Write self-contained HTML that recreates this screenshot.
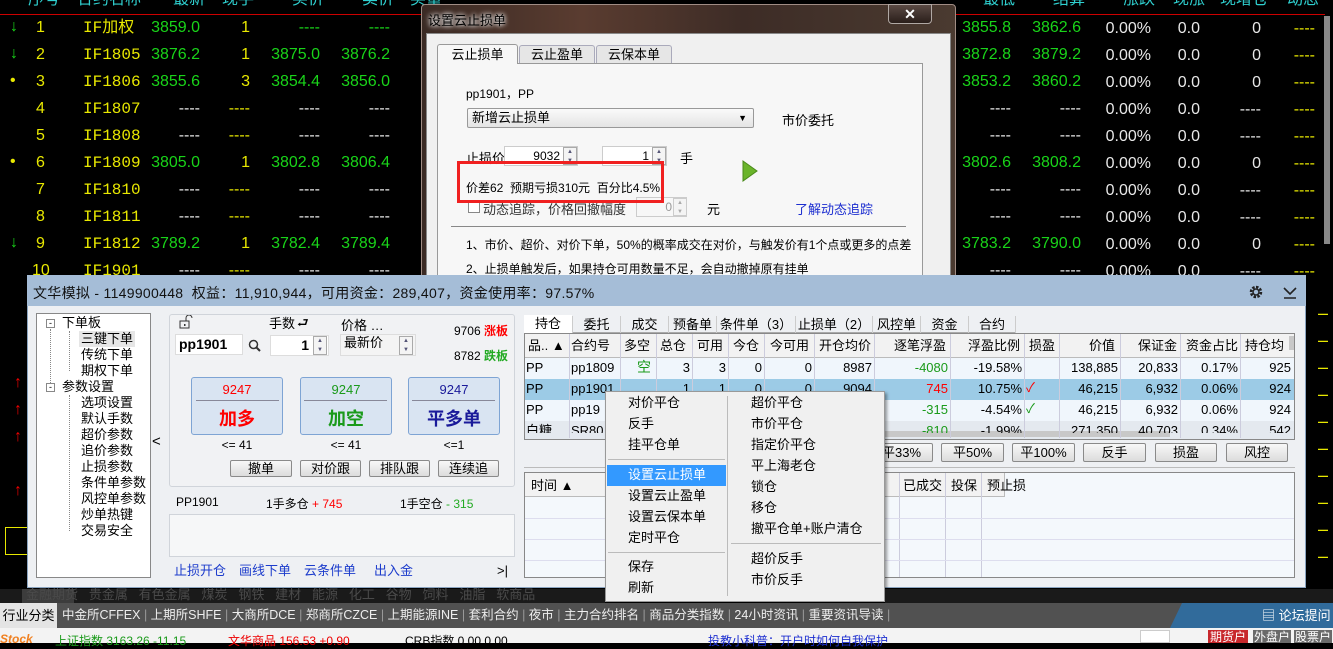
<!DOCTYPE html>
<html><head><meta charset="utf-8">
<style>
*{margin:0;padding:0;box-sizing:border-box}
body{width:1333px;height:643px;overflow:hidden;background:#000;position:relative;font-family:"Liberation Sans","Noto Sans CJK SC",sans-serif;font-size:12px}
.a{position:absolute;white-space:nowrap}
.q{font-family:"Liberation Sans","Noto Sans CJK SC",sans-serif;font-size:16px;line-height:18px}
.n{font-family:"Liberation Mono","Noto Sans CJK SC",monospace;font-size:16px;line-height:18px;color:#e8e800}
.g{color:#19d419}.y{color:#e8e800}.w{color:#e8e8e8}.cy{color:#2fd0d0}
.t13{font-size:13px;line-height:16px}
.btn{position:absolute;border:1px solid #8a8a8a;border-radius:2px;background:linear-gradient(#f8f8f8,#dcdcdc);text-align:center;font-size:13px;line-height:17px;color:#000}
.sp{position:absolute;width:14px;height:19px;border:1px solid #aaa;background:#f4f4f4;font-size:6px;line-height:9px;text-align:center;color:#557}
</style></head><body>

<div class="a cy q" style="top:-9px;left:28px">序号</div>
<div class="a cy q" style="top:-9px;left:77px">合约名称</div>
<div class="a cy q" style="top:-9px;left:173px">最新</div>
<div class="a cy q" style="top:-9px;left:222px">现手</div>
<div class="a cy q" style="top:-9px;left:292px">买价</div>
<div class="a cy q" style="top:-9px;left:362px">卖价</div>
<div class="a cy q" style="top:-9px;left:410px">买量</div>
<div class="a cy q" style="top:-9px;left:983px">最低</div>
<div class="a cy q" style="top:-9px;left:1053px">结算</div>
<div class="a cy q" style="top:-9px;left:1123px">涨跌</div>
<div class="a cy q" style="top:-9px;left:1173px">现涨</div>
<div class="a cy q" style="top:-9px;left:1220px">现增仓</div>
<div class="a cy q" style="top:-9px;left:1287px">动态</div>
<div class="a" style="top:14px;left:0;width:1325px;height:1px;background:#c00"></div>
<div class="a" style="top:16px;left:1324px;width:6px;height:228px;background:#888"></div>

<div class="a g q" style="top:18px;left:10px">↓</div>
<div class="a y q" style="top:19px;left:36px">1</div><div class="a n" style="top:19px;left:83px">IF加权</div>
<div class="a g q" style="top:19px;right:1133px">3859.0</div><div class="a y q" style="top:19px;right:1083px">1</div>
<div class="a g q" style="top:19px;right:1013px">----</div><div class="a g q" style="top:19px;right:943px">----</div>
<div class="a g q" style="top:45px;left:10px">↓</div>
<div class="a y q" style="top:46px;left:36px">2</div><div class="a n" style="top:46px;left:83px">IF1805</div>
<div class="a g q" style="top:46px;right:1133px">3876.2</div><div class="a y q" style="top:46px;right:1083px">1</div>
<div class="a g q" style="top:46px;right:1013px">3875.0</div><div class="a g q" style="top:46px;right:943px">3876.2</div>
<div class="a y q" style="top:72px;left:10px">•</div>
<div class="a y q" style="top:73px;left:36px">3</div><div class="a n" style="top:73px;left:83px">IF1806</div>
<div class="a g q" style="top:73px;right:1133px">3855.6</div><div class="a y q" style="top:73px;right:1083px">3</div>
<div class="a g q" style="top:73px;right:1013px">3854.4</div><div class="a g q" style="top:73px;right:943px">3856.0</div>
<div class="a y q" style="top:100px;left:36px">4</div><div class="a n" style="top:100px;left:83px">IF1807</div>
<div class="a w q" style="top:100px;right:1133px">----</div><div class="a y q" style="top:100px;right:1083px">----</div>
<div class="a w q" style="top:100px;right:1013px">----</div><div class="a w q" style="top:100px;right:943px">----</div>
<div class="a y q" style="top:127px;left:36px">5</div><div class="a n" style="top:127px;left:83px">IF1808</div>
<div class="a w q" style="top:127px;right:1133px">----</div><div class="a y q" style="top:127px;right:1083px">----</div>
<div class="a w q" style="top:127px;right:1013px">----</div><div class="a w q" style="top:127px;right:943px">----</div>
<div class="a y q" style="top:153px;left:10px">•</div>
<div class="a y q" style="top:154px;left:36px">6</div><div class="a n" style="top:154px;left:83px">IF1809</div>
<div class="a g q" style="top:154px;right:1133px">3805.0</div><div class="a y q" style="top:154px;right:1083px">1</div>
<div class="a g q" style="top:154px;right:1013px">3802.8</div><div class="a g q" style="top:154px;right:943px">3806.4</div>
<div class="a y q" style="top:181px;left:36px">7</div><div class="a n" style="top:181px;left:83px">IF1810</div>
<div class="a w q" style="top:181px;right:1133px">----</div><div class="a y q" style="top:181px;right:1083px">----</div>
<div class="a w q" style="top:181px;right:1013px">----</div><div class="a w q" style="top:181px;right:943px">----</div>
<div class="a y q" style="top:208px;left:36px">8</div><div class="a n" style="top:208px;left:83px">IF1811</div>
<div class="a w q" style="top:208px;right:1133px">----</div><div class="a y q" style="top:208px;right:1083px">----</div>
<div class="a w q" style="top:208px;right:1013px">----</div><div class="a w q" style="top:208px;right:943px">----</div>
<div class="a g q" style="top:234px;left:10px">↓</div>
<div class="a y q" style="top:235px;left:36px">9</div><div class="a n" style="top:235px;left:83px">IF1812</div>
<div class="a g q" style="top:235px;right:1133px">3789.2</div><div class="a y q" style="top:235px;right:1083px">1</div>
<div class="a g q" style="top:235px;right:1013px">3782.4</div><div class="a g q" style="top:235px;right:943px">3789.4</div>
<div class="a y q" style="top:262px;left:32px">10</div><div class="a n" style="top:262px;left:83px">IF1901</div>
<div class="a w q" style="top:262px;right:1133px">----</div><div class="a y q" style="top:262px;right:1083px">----</div>
<div class="a w q" style="top:262px;right:1013px">----</div><div class="a w q" style="top:262px;right:943px">----</div>

<div class="a g q" style="top:19px;right:322px">3855.8</div><div class="a g q" style="top:19px;right:252px">3862.6</div>
<div class="a g q" style="top:46px;right:322px">3872.8</div><div class="a g q" style="top:46px;right:252px">3879.2</div>
<div class="a g q" style="top:73px;right:322px">3853.2</div><div class="a g q" style="top:73px;right:252px">3860.2</div>
<div class="a w q" style="top:100px;right:322px">----</div><div class="a w q" style="top:100px;right:252px">----</div>
<div class="a w q" style="top:127px;right:322px">----</div><div class="a w q" style="top:127px;right:252px">----</div>
<div class="a g q" style="top:154px;right:322px">3802.6</div><div class="a g q" style="top:154px;right:252px">3808.2</div>
<div class="a w q" style="top:181px;right:322px">----</div><div class="a w q" style="top:181px;right:252px">----</div>
<div class="a w q" style="top:208px;right:322px">----</div><div class="a w q" style="top:208px;right:252px">----</div>
<div class="a g q" style="top:235px;right:322px">3783.2</div><div class="a g q" style="top:235px;right:252px">3790.0</div>
<div class="a w q" style="top:262px;right:322px">----</div><div class="a w q" style="top:262px;right:252px">----</div>

<div class="a w q" style="top:19px;right:182px;text-align:right;line-height:27px;margin-top:-4px">0.00%<br>0.00%<br>0.00%<br>0.00%<br>0.00%<br>0.00%<br>0.00%<br>0.00%<br>0.00%<br>0.00%</div>
<div class="a w q" style="top:19px;right:133px;text-align:right;line-height:27px;margin-top:-4px">0.0<br>0.0<br>0.0<br>0.0<br>0.0<br>0.0<br>0.0<br>0.0<br>0.0<br>0.0</div>
<div class="a w q" style="top:19px;right:72px;text-align:right;line-height:27px;margin-top:-4px">0<br>0<br>0<br>----<br>----<br>0<br>----<br>----<br>0<br>----</div>
<div class="a y q" style="top:19px;right:18px;text-align:right;line-height:27px;margin-top:-4px">----<br>----<br>----<br>----<br>----<br>----<br>----<br>----<br>----<br>----</div>

<div class="a" style="left:14px;top:369px;color:#e00;font-size:16px;line-height:27px">↑<br>↑<br>↑<br><br>↑</div>
<div class="a" style="left:5px;top:527px;width:23px;height:28px;border:1px solid #e8e800;border-right:none"></div>
<div class="a" style="left:1318px;top:298px;width:8px;line-height:27px;color:#e8e800;font-size:10px">▁<br>▁<br>▁<br>▁<br>▁<br>▁<br>▁<br>▁<br>▁<br>▁</div>

<!-- DIALOG -->
<div class="a" style="left:421px;top:4px;width:535px;height:280px;background:linear-gradient(90deg,#3a2a24,#5a3c30 30%,#3d2c26 60%,#4a3a30);border:1px solid #a08c84;border-radius:4px"></div>
<div class="a" style="left:428px;top:10px;color:#000;font-size:13px;text-shadow:0 0 6px #fff,0 0 4px #fff">设置云止损单</div>
<div class="a" style="left:888px;top:4px;width:44px;height:20px;border:1px solid #b0a8a4;border-radius:0 0 4px 4px;background:linear-gradient(#5a4a44,#2a1e1a);color:#fff;text-align:center;font-size:14px;font-weight:bold;line-height:18px">✕</div>
<div class="a" style="left:426px;top:33px;width:525px;height:250px;background:#f0f0f0;border:1px solid #888"></div>
<div class="a" style="left:437px;top:63px;width:486px;height:220px;border:1px solid #999;background:#f7f7f7"></div>
<div class="a" style="left:437px;top:44px;width:81px;height:20px;background:#f7f7f7;border:1px solid #999;border-bottom:none;border-radius:3px 3px 0 0;text-align:center;font-size:13px;line-height:20px">云止损单</div>
<div class="a" style="left:519px;top:45px;width:76px;height:18px;background:#e6e6e6;border:1px solid #aab;border-bottom:none;border-radius:3px 3px 0 0;text-align:center;font-size:13px;line-height:18px">云止盈单</div>
<div class="a" style="left:596px;top:45px;width:76px;height:18px;background:#e6e6e6;border:1px solid #aab;border-bottom:none;border-radius:3px 3px 0 0;text-align:center;font-size:13px;line-height:18px">云保本单</div>
<div class="a" style="left:466px;top:85px;font-size:12px">pp1901，PP</div>
<div class="a" style="left:467px;top:108px;width:287px;height:20px;border:1px solid #999;border-radius:2px;background:linear-gradient(#fafafa,#e4e4e4);font-size:13px;line-height:18px;padding-left:4px">新增云止损单<span style="position:absolute;right:6px;font-size:9px">▼</span></div>
<div class="a" style="left:782px;top:110px;font-size:13px">市价委托</div>
<div class="a" style="left:466px;top:148px;font-size:13px">止损价</div>
<div class="a" style="left:504px;top:146px;width:74px;height:20px;background:#fff;border:1px solid #ccc;text-align:right;padding-right:17px;font-size:12px;line-height:18px">9032</div>
<div class="sp" style="left:563px;top:147px;height:18px">▲<br>▼</div>
<div class="a" style="left:602px;top:146px;width:65px;height:20px;background:#fff;border:1px solid #ccc;text-align:right;padding-right:17px;font-size:12px;line-height:18px">1</div>
<div class="sp" style="left:652px;top:147px;height:18px">▲<br>▼</div>
<div class="a" style="left:680px;top:148px;font-size:13px">手</div>
<svg class="a" style="left:742px;top:160px" width="16" height="22"><polygon points="1,1 15,11 1,21" fill="#6ab42a" stroke="#4a8a1a"/></svg>
<div class="a" style="left:466px;top:179px;font-size:12px">价差62&nbsp; 预期亏损310元&nbsp; 百分比4.5%</div>
<div class="a" style="left:468px;top:201px;width:12px;height:12px;border:1px solid #888;background:#fff"></div>
<div class="a" style="left:483px;top:199px;font-size:13px;color:#333">动态追踪，价格回撤幅度</div>
<div class="a" style="left:636px;top:197px;width:51px;height:20px;border:1px solid #ccc;color:#999;text-align:right;padding-right:14px;font-size:12px;line-height:18px">0</div>
<div class="sp" style="left:673px;top:198px;height:18px;color:#aaa;border-color:#ccc">▲<br>▼</div>
<div class="a" style="left:707px;top:199px;font-size:13px">元</div>
<div class="a" style="left:795px;top:199px;font-size:13px;color:#1c2ed0">了解动态追踪</div>
<div class="a" style="left:457px;top:161px;width:207px;height:42px;border:3px solid #f02020"></div>
<div class="a" style="left:451px;top:226px;width:455px;height:1px;background:#888"></div>
<div class="a" style="left:466px;top:236px;font-size:12px">1、市价、超价、对价下单，50%的概率成交在对价，与触发价有1个点或更多的点差</div>
<div class="a" style="left:466px;top:260px;font-size:12px">2、止损单触发后，如果持仓可用数量不足，会自动撤掉原有挂单</div>

<!-- MAIN WINDOW -->
<div class="a" style="left:27px;top:275px;width:1279px;height:313px;background:#eef0f3;border:1px solid #8aa4c0"></div>
<div class="a" style="left:27px;top:275px;width:1279px;height:31px;background:#a5bdd7"></div>
<div class="a" style="left:33px;top:283px;font-size:14px;color:#111;letter-spacing:0.3px">文华模拟 - 1149900448&nbsp; 权益：11,910,944，可用资金：289,407，资金使用率：97.57%</div>
<svg class="a" style="left:1247px;top:283px" width="18" height="18"><circle cx="9" cy="9" r="5" fill="none" stroke="#222" stroke-width="2.5" stroke-dasharray="2.5 1.4"/><circle cx="9" cy="9" r="3" fill="none" stroke="#222" stroke-width="1.5"/></svg>
<svg class="a" style="left:1282px;top:284px" width="16" height="16"><path d="M2 4 L8 10 L14 4 M2 14 H14" stroke="#222" stroke-width="1.6" fill="none"/></svg>

<div class="a" style="left:36px;top:313px;width:115px;height:265px;background:#fff;border:1px solid #888"></div>
<div class="a" style="left:46px;top:319px;width:9px;height:9px;border:1px solid #888;font-size:9px;line-height:6px;text-align:center">-</div>
<div class="a" style="left:46px;top:383px;width:9px;height:9px;border:1px solid #888;font-size:9px;line-height:6px;text-align:center">-</div>
<div class="a" style="left:50px;top:329px;height:54px;border-left:1px dotted #888"></div>
<div class="a" style="left:69px;top:331px;height:40px;border-left:1px dotted #888"></div>
<div class="a" style="left:69px;top:395px;height:136px;border-left:1px dotted #888"></div>
<div class="a t13" style="left:62px;top:315px">下单板</div>
<div class="a t13" style="left:79px;top:331px;background:#e6e6e6;padding:0 2px">三键下单</div>
<div class="a t13" style="left:81px;top:347px">传统下单</div>
<div class="a t13" style="left:81px;top:363px">期权下单</div>
<div class="a t13" style="left:62px;top:379px">参数设置</div>
<div class="a t13" style="left:81px;top:395px">选项设置</div>
<div class="a t13" style="left:81px;top:411px">默认手数</div>
<div class="a t13" style="left:81px;top:427px">超价参数</div>
<div class="a t13" style="left:81px;top:443px">追价参数</div>
<div class="a t13" style="left:81px;top:459px">止损参数</div>
<div class="a t13" style="left:81px;top:475px">条件单参数</div>
<div class="a t13" style="left:81px;top:491px">风控单参数</div>
<div class="a t13" style="left:81px;top:507px">炒单热键</div>
<div class="a t13" style="left:81px;top:523px">交易安全</div>
<div class="a" style="left:152px;top:433px;font-size:15px">&lt;</div>

<div class="a" style="left:169px;top:314px;width:346px;height:173px;border:1px solid #d0d4da;border-radius:3px;background:#f1f2f4"></div>
<svg class="a" style="left:179px;top:315px" width="14" height="14"><rect x="1" y="6" width="9" height="7" fill="none" stroke="#333"/><path d="M7 6 V3 A3 3 0 0 1 13 3" fill="none" stroke="#333"/><rect x="5" y="9" width="1.5" height="2" fill="#333"/></svg>
<div class="a t13" style="left:269px;top:316px">手数</div>
<div class="a" style="left:297px;top:314px;font-size:13px">⮐</div>
<div class="a t13" style="left:341px;top:318px">价格 …</div>
<div class="a" style="left:175px;top:334px;width:68px;height:21px;background:#fff;border:1px solid #ddd;font-size:14px;font-weight:bold;line-height:19px;padding-left:3px">pp1901</div>
<svg class="a" style="left:248px;top:339px" width="13" height="13"><circle cx="5.5" cy="5.5" r="4" fill="none" stroke="#333" stroke-width="1.5"/><path d="M8.5 8.5 L12 12" stroke="#333" stroke-width="2"/></svg>
<div class="a" style="left:270px;top:335px;width:59px;height:21px;background:#fff;border:1px solid #ddd;font-size:14px;font-weight:bold;line-height:19px;padding-right:19px;text-align:right">1</div>
<div class="sp" style="left:313px;top:336px">▲<br>▼</div>
<div class="a" style="left:340px;top:334px;width:76px;height:22px;background:#f4f4f4;border:1px solid #ddd;font-size:13px;line-height:16px;padding-left:3px">最新价</div>
<div class="sp" style="left:399px;top:336px">▲<br>▼</div>
<div class="a" style="right:825px;top:322px;font-size:12px">9706 <b style="color:#f00">涨板</b></div>
<div class="a" style="right:825px;top:347px;font-size:12px">8782 <b style="color:#2a2">跌板</b></div>

<div class="a" style="left:191px;top:377px;width:92px;height:58px;background:#d9e4f2;border:1px solid #7ea4d4;border-radius:3px"></div>
<div class="a" style="left:300px;top:377px;width:92px;height:58px;background:#d9e4f2;border:1px solid #7ea4d4;border-radius:3px"></div>
<div class="a" style="left:408px;top:377px;width:92px;height:58px;background:#d9e4f2;border:1px solid #7ea4d4;border-radius:3px"></div>
<div class="a" style="left:196px;top:400px;width:83px;height:1px;background:#889"></div>
<div class="a" style="left:304px;top:400px;width:83px;height:1px;background:#889"></div>
<div class="a" style="left:412px;top:400px;width:83px;height:1px;background:#889"></div>
<div class="a" style="left:191px;top:382px;width:92px;text-align:center;font-size:13px;color:#f00">9247</div>
<div class="a" style="left:300px;top:382px;width:92px;text-align:center;font-size:13px;color:#1a9a1a">9247</div>
<div class="a" style="left:408px;top:382px;width:92px;text-align:center;font-size:13px;color:#1a1a9a">9247</div>
<div class="a" style="left:191px;top:405px;width:92px;text-align:center;font-size:18px;font-weight:bold;color:#f00">加多</div>
<div class="a" style="left:300px;top:405px;width:92px;text-align:center;font-size:18px;font-weight:bold;color:#1a9a1a">加空</div>
<div class="a" style="left:408px;top:405px;width:92px;text-align:center;font-size:18px;font-weight:bold;color:#1a1a9a">平多单</div>
<div class="a" style="left:191px;top:438px;width:92px;text-align:center;font-size:12px">&lt;= 41</div>
<div class="a" style="left:300px;top:438px;width:92px;text-align:center;font-size:12px">&lt;= 41</div>
<div class="a" style="left:408px;top:438px;width:92px;text-align:center;font-size:12px">&lt;=1</div>
<div class="btn" style="left:230px;top:460px;width:62px;height:17px;line-height:15px">撤单</div>
<div class="btn" style="left:300px;top:460px;width:61px;height:17px;line-height:15px">对价跟</div>
<div class="btn" style="left:369px;top:460px;width:61px;height:17px;line-height:15px">排队跟</div>
<div class="btn" style="left:438px;top:460px;width:61px;height:17px;line-height:15px">连续追</div>
<div class="a" style="left:176px;top:495px;font-size:12px">PP1901</div>
<div class="a" style="left:266px;top:495px;font-size:12px">1手多仓 <span style="color:#f00">+ 745</span></div>
<div class="a" style="left:400px;top:495px;font-size:12px">1手空仓 <span style="color:#2a2">- 315</span></div>
<div class="a" style="left:169px;top:514px;width:346px;height:43px;background:#f6f7f8;border:1px solid #d0d4da"></div>
<div class="a t13" style="left:174px;top:563px;color:#1c3ccc">止损开仓</div>
<div class="a t13" style="left:239px;top:563px;color:#1c3ccc">画线下单</div>
<div class="a t13" style="left:304px;top:563px;color:#1c3ccc">云条件单</div>
<div class="a t13" style="left:374px;top:563px;color:#1c3ccc">出入金</div>
<div class="a t13" style="left:497px;top:563px">&gt;|</div>

<div class="a" style="left:524px;top:315px;width:492px;height:18px;border-bottom:1px solid #aaa"></div>
<div class="a t13" style="left:524px;top:315px;width:48px;height:19px;background:#fff;text-align:center;line-height:18px">持仓</div>
<div class="a t13" style="left:572px;top:316px;width:48px;line-height:17px;text-align:center;border-left:1px solid #ccc">委托</div>
<div class="a t13" style="left:620px;top:316px;width:48px;line-height:17px;text-align:center;border-left:1px solid #ccc">成交</div>
<div class="a t13" style="left:668px;top:316px;width:48px;line-height:17px;text-align:center;border-left:1px solid #ccc">预备单</div>
<div class="a t13" style="left:716px;top:316px;width:79px;line-height:17px;text-align:center;border-left:1px solid #ccc">条件单（3）</div>
<div class="a t13" style="left:795px;top:316px;width:77px;line-height:17px;text-align:center;border-left:1px solid #ccc">止损单（2）</div>
<div class="a t13" style="left:872px;top:316px;width:48px;line-height:17px;text-align:center;border-left:1px solid #ccc">风控单</div>
<div class="a t13" style="left:920px;top:316px;width:48px;line-height:17px;text-align:center;border-left:1px solid #ccc">资金</div>
<div class="a t13" style="left:968px;top:316px;width:48px;line-height:17px;text-align:center;border-left:1px solid #ccc;border-right:1px solid #ccc">合约</div>

<div class="a" style="left:524px;top:333px;width:771px;height:107px;background:#fff;border:1px solid #888;overflow:hidden">
<div style="position:absolute;left:0;top:0;width:770px;height:24px;background:#f2f2f2;border-bottom:1px solid #bbb"></div>
<div style="position:absolute;left:0;top:24px;width:770px;height:21px;background:#f0f6fc"></div>
<div style="position:absolute;left:0;top:45px;width:770px;height:21px;background:#9ccbe6"></div>
<div style="position:absolute;left:0;top:66px;width:770px;height:21px;background:#f0f6fc"></div>
<div style="position:absolute;left:0;top:87px;width:770px;height:21px;background:#e4e9ef"></div>
<div style="position:absolute;left:345px;top:97px;width:300px;height:6px;background:#c8c8c8"></div>
<div style="position:absolute;left:764px;top:2px;width:5px;height:14px;background:#c8c8c8"></div>
</div>
<div class="a t13" style="left:528px;top:338px">品.. ▲</div>
<div class="a t13" style="left:571px;top:338px">合约号</div>
<div class="a t13" style="left:624px;top:338px">多空</div>
<div class="a t13" style="left:660px;top:338px">总仓</div>
<div class="a t13" style="left:697px;top:338px">可用</div>
<div class="a t13" style="left:733px;top:338px">今仓</div>
<div class="a t13" style="left:770px;top:338px">今可用</div>
<div class="a t13" style="left:819px;top:338px">开仓均价</div>
<div class="a t13" style="left:894px;top:338px">逐笔浮盈</div>
<div class="a t13" style="left:968px;top:338px">浮盈比例</div>
<div class="a t13" style="left:1029px;top:338px">损盈</div>
<div class="a t13" style="left:1089px;top:338px">价值</div>
<div class="a t13" style="left:1138px;top:338px">保证金</div>
<div class="a t13" style="left:1186px;top:338px">资金占比</div>
<div class="a t13" style="left:1245px;top:338px">持仓均</div>
<div class="a" style="left:569px;top:334px;width:1px;height:104px;background:#ccd"></div>
<div class="a" style="left:620px;top:334px;width:1px;height:104px;background:#ccd"></div>
<div class="a" style="left:656px;top:334px;width:1px;height:104px;background:#ccd"></div>
<div class="a" style="left:692px;top:334px;width:1px;height:104px;background:#ccd"></div>
<div class="a" style="left:728px;top:334px;width:1px;height:104px;background:#ccd"></div>
<div class="a" style="left:764px;top:334px;width:1px;height:104px;background:#ccd"></div>
<div class="a" style="left:814px;top:334px;width:1px;height:104px;background:#ccd"></div>
<div class="a" style="left:874px;top:334px;width:1px;height:104px;background:#ccd"></div>
<div class="a" style="left:950px;top:334px;width:1px;height:104px;background:#ccd"></div>
<div class="a" style="left:1024px;top:334px;width:1px;height:104px;background:#ccd"></div>
<div class="a" style="left:1059px;top:334px;width:1px;height:104px;background:#ccd"></div>
<div class="a" style="left:1120px;top:334px;width:1px;height:104px;background:#ccd"></div>
<div class="a" style="left:1180px;top:334px;width:1px;height:104px;background:#ccd"></div>
<div class="a" style="left:1240px;top:334px;width:1px;height:104px;background:#ccd"></div>
<div class="a t13" style="left:526px;top:360px">PP</div><div class="a t13" style="left:571px;top:360px">pp1809</div><div class="a t13" style="left:637px;top:359px;color:#1a9a1a;font-size:14px">空</div>
<div class="a t13" style="right:643px;top:360px">3</div><div class="a t13" style="right:607px;top:360px">3</div><div class="a t13" style="right:571px;top:360px">0</div><div class="a t13" style="right:521px;top:360px">0</div><div class="a t13" style="right:461px;top:360px">8987</div>
<div class="a t13" style="right:385px;top:360px;color:#1a9a1a">-4080</div><div class="a t13" style="right:311px;top:360px">-19.58%</div><div class="a t13" style="right:215px;top:360px">138,885</div><div class="a t13" style="right:155px;top:360px">20,833</div><div class="a t13" style="right:95px;top:360px">0.17%</div><div class="a t13" style="right:42px;top:360px">925</div>
<div class="a t13" style="left:526px;top:381px">PP</div><div class="a t13" style="left:571px;top:381px">pp1901</div>
<div class="a t13" style="right:643px;top:381px">1</div><div class="a t13" style="right:607px;top:381px">1</div><div class="a t13" style="right:571px;top:381px">0</div><div class="a t13" style="right:521px;top:381px">0</div><div class="a t13" style="right:461px;top:381px">9094</div>
<div class="a t13" style="right:385px;top:381px;color:#f00">745</div><div class="a t13" style="right:311px;top:381px">10.75%</div><div class="a t13" style="left:1026px;top:380px;color:#f00">✓</div><div class="a t13" style="right:215px;top:381px">46,215</div><div class="a t13" style="right:155px;top:381px">6,932</div><div class="a t13" style="right:95px;top:381px">0.06%</div><div class="a t13" style="right:42px;top:381px">924</div>
<div class="a t13" style="left:526px;top:402px">PP</div><div class="a t13" style="left:571px;top:402px">pp19</div>
<div class="a t13" style="right:385px;top:402px;color:#1a9a1a">-315</div><div class="a t13" style="right:311px;top:402px">-4.54%</div><div class="a t13" style="left:1026px;top:401px;color:#1a9a1a">✓</div><div class="a t13" style="right:215px;top:402px">46,215</div><div class="a t13" style="right:155px;top:402px">6,932</div><div class="a t13" style="right:95px;top:402px">0.06%</div><div class="a t13" style="right:42px;top:402px">924</div>
<div class="a t13" style="left:526px;top:423px;height:10px;overflow:hidden">白糖</div><div class="a t13" style="left:571px;top:423px;height:10px;overflow:hidden">SR80</div>
<div class="a t13" style="right:385px;top:423px;color:#1a9a1a;height:10px;overflow:hidden">-810</div><div class="a t13" style="right:311px;top:423px;height:10px;overflow:hidden">-1.99%</div><div class="a t13" style="right:215px;top:423px;height:10px;overflow:hidden">271,350</div><div class="a t13" style="right:155px;top:423px;height:10px;overflow:hidden">40,703</div><div class="a t13" style="right:95px;top:423px;height:10px;overflow:hidden">0.34%</div><div class="a t13" style="right:42px;top:423px;height:10px;overflow:hidden">542</div>

<div class="btn" style="left:870px;top:443px;width:63px;height:19px">平33%</div>
<div class="btn" style="left:941px;top:443px;width:63px;height:19px">平50%</div>
<div class="btn" style="left:1012px;top:443px;width:63px;height:19px">平100%</div>
<div class="btn" style="left:1083px;top:443px;width:63px;height:19px">反手</div>
<div class="btn" style="left:1155px;top:443px;width:62px;height:19px">损盈</div>
<div class="btn" style="left:1226px;top:443px;width:62px;height:19px">风控</div>
<div class="a" style="left:524px;top:467px;width:771px;height:1px;background:#bbb"></div>

<div class="a" style="left:524px;top:472px;width:771px;height:106px;background:#f4f8fc;border:1px solid #888"></div>
<div class="a" style="left:525px;top:473px;width:480px;height:24px;background:#f2f2f2;border-bottom:1px solid #bbb;border-right:1px solid #bbb"></div>
<div class="a t13" style="left:531px;top:478px">时间 ▲</div>
<div class="a t13" style="left:903px;top:478px">已成交</div>
<div class="a t13" style="left:951px;top:478px">投保</div>
<div class="a t13" style="left:987px;top:478px">预止损</div>
<div class="a" style="left:899px;top:473px;width:1px;height:104px;background:#ccd"></div>
<div class="a" style="left:945px;top:473px;width:1px;height:104px;background:#ccd"></div>
<div class="a" style="left:981px;top:473px;width:1px;height:104px;background:#ccd"></div>
<div class="a" style="left:525px;top:518px;width:769px;height:1px;background:#dde"></div>
<div class="a" style="left:525px;top:539px;width:769px;height:1px;background:#dde"></div>
<div class="a" style="left:525px;top:560px;width:769px;height:1px;background:#dde"></div>

<div class="a" style="left:605px;top:391px;width:280px;height:211px;background:#f0f0f0;border:1px solid #999;box-shadow:2px 2px 3px rgba(0,0,0,.4)"></div>
<div class="a" style="left:727px;top:396px;width:1px;height:200px;background:#bbb"></div>
<div class="a" style="left:608px;top:459px;width:117px;height:1px;background:#bbb"></div>
<div class="a" style="left:608px;top:552px;width:117px;height:1px;background:#bbb"></div>
<div class="a" style="left:731px;top:543px;width:150px;height:1px;background:#bbb"></div>
<div class="a" style="left:607px;top:465px;width:119px;height:21px;background:#3399ff"></div>
<div class="a t13" style="left:628px;top:395px">对价平仓</div>
<div class="a t13" style="left:628px;top:416px">反手</div>
<div class="a t13" style="left:628px;top:437px">挂平仓单</div>
<div class="a t13" style="left:628px;top:467px;color:#fff">设置云止损单</div>
<div class="a t13" style="left:628px;top:488px">设置云止盈单</div>
<div class="a t13" style="left:628px;top:509px">设置云保本单</div>
<div class="a t13" style="left:628px;top:530px">定时平仓</div>
<div class="a t13" style="left:628px;top:559px">保存</div>
<div class="a t13" style="left:628px;top:580px">刷新</div>
<div class="a t13" style="left:751px;top:395px">超价平仓</div>
<div class="a t13" style="left:751px;top:416px">市价平仓</div>
<div class="a t13" style="left:751px;top:437px">指定价平仓</div>
<div class="a t13" style="left:751px;top:458px">平上海老仓</div>
<div class="a t13" style="left:751px;top:479px">锁仓</div>
<div class="a t13" style="left:751px;top:500px">移仓</div>
<div class="a t13" style="left:751px;top:521px">撤平仓单+账户清仓</div>
<div class="a t13" style="left:751px;top:551px">超价反手</div>
<div class="a t13" style="left:751px;top:572px">市价反手</div>

<div class="a" style="left:0;top:589px;width:605px;height:14px;background:#1a1a1a"></div>
<div class="a" style="left:885px;top:589px;width:448px;height:14px;background:#1a1a1a"></div>
<div class="a" style="left:22px;top:589px;width:52px;height:14px;background:#3c3c3c"></div>
<div class="a" style="left:26px;top:584px;font-size:13px;color:#4a4a4a;height:19px;overflow:hidden">金融期货&nbsp;&nbsp;&nbsp;贵金属&nbsp;&nbsp;&nbsp;有色金属&nbsp;&nbsp;&nbsp;煤炭&nbsp;&nbsp;&nbsp;钢铁&nbsp;&nbsp;&nbsp;建材&nbsp;&nbsp;&nbsp;能源&nbsp;&nbsp;&nbsp;化工&nbsp;&nbsp;&nbsp;谷物&nbsp;&nbsp;&nbsp;饲料&nbsp;&nbsp;&nbsp;油脂&nbsp;&nbsp;&nbsp;软商品</div>

<div class="a" style="left:0;top:603px;width:1333px;height:25px;background:#515151"></div>
<div class="a" style="left:0;top:603px;width:57px;height:25px;background:#e4e4e4;font-size:13px;line-height:25px;text-align:center">行业分类</div>
<div class="a" style="left:62px;top:603px;font-size:12.5px;line-height:25px;color:#eee">中金所CFFEX <span style="color:#999">|</span> 上期所SHFE <span style="color:#999">|</span> 大商所DCE <span style="color:#999">|</span> 郑商所CZCE <span style="color:#999">|</span> 上期能源INE <span style="color:#999">|</span> 套利合约 <span style="color:#999">|</span> 夜市 <span style="color:#999">|</span> 主力合约排名 <span style="color:#999">|</span> 商品分类指数 <span style="color:#999">|</span> 24小时资讯 <span style="color:#999">|</span> 重要资讯导读 <span style="color:#999">|</span></div>
<svg class="a" style="left:1170px;top:603px" width="163" height="25"><polygon points="12,0 163,0 163,25 0,25" fill="#316b9b"/></svg>
<div class="a" style="left:1262px;top:603px;font-size:13px;line-height:25px;color:#fff">▤ 论坛提问</div>

<div class="a" style="left:0;top:628px;width:1333px;height:15px;background:#f3f3f3"></div>
<div class="a" style="left:0;top:632px;font-size:12px;color:#f08020;font-weight:bold;font-style:italic">Stock</div>
<div class="a" style="left:55px;top:632px;font-size:12px;color:#1a9a1a">上证指数 3163.26 -11.15</div>
<div class="a" style="left:228px;top:632px;font-size:12px;color:#e00">文华商品 156.53 +0.90</div>
<div class="a" style="left:405px;top:632px;font-size:12px;color:#000">CRB指数 0.00 0.00</div>
<div class="a" style="left:708px;top:632px;font-size:12px;color:#1c2ed0">投教小科普：开户时如何自我保护</div>
<div class="a" style="left:1140px;top:630px;width:30px;height:13px;background:#fff;border:1px solid #ccc"></div>
<div class="a" style="left:1208px;top:630px;width:40px;height:13px;background:#c8282c;color:#fff;font-size:12px;text-align:center;line-height:14px">期货户</div>
<div class="a" style="left:1253px;top:630px;width:38px;height:13px;background:#6a6a6a;color:#fff;font-size:12px;text-align:center;line-height:14px">外盘户</div>
<div class="a" style="left:1294px;top:630px;width:38px;height:13px;background:#6a6a6a;color:#fff;font-size:12px;text-align:center;line-height:14px">股票户</div>
</body></html>
